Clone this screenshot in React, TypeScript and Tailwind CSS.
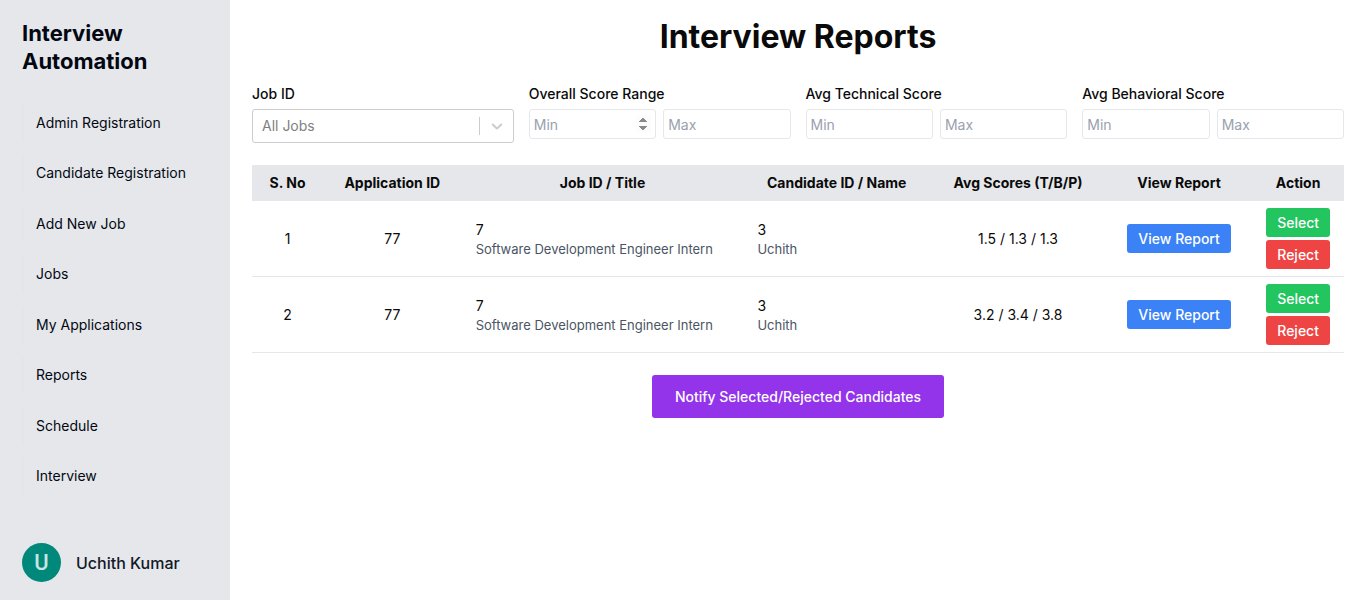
import React from "react";

const navItems = [
  "Admin Registration",
  "Candidate Registration",
  "Add New Job",
  "Jobs",
  "My Applications",
  "Reports",
  "Schedule",
  "Interview",
];

const scoreFilters = [
  { id: "overall", label: "Overall Score Range", stepper: true },
  { id: "technical", label: "Avg Technical Score", stepper: false },
  { id: "behavioral", label: "Avg Behavioral Score", stepper: false },
];

const reports = [
  { no: 1, application: 77, job: 7, title: "Software Development Engineer Intern", candidate: 3, name: "Uchith", scores: "1.5 / 1.3 / 1.3" },
  { no: 2, application: 77, job: 7, title: "Software Development Engineer Intern", candidate: 3, name: "Uchith", scores: "3.2 / 3.4 / 3.8" },
];

const columns = [
  { label: "S. No", width: "w-[6.5%]" },
  { label: "Application ID", width: "w-[12.7%]" },
  { label: "Job ID / Title", width: "w-[25.8%]" },
  { label: "Candidate ID / Name", width: "w-[17.1%]" },
  { label: "Avg Scores (T/B/P)", width: "w-[16.1%]" },
  { label: "View Report", width: "w-[13.4%]" },
  { label: "Action", width: "w-[8.4%]" },
];

function Sidebar() {
  return (
    <aside className="flex w-[230px] shrink-0 flex-col bg-gray-200 px-[22px] pt-[19px] pb-[18px]">
      <h2 className="text-[22px] leading-7 font-bold text-[#030712]">Interview Automation</h2>
      <nav className="mt-[30px] mb-[49px] flex flex-1 flex-col justify-between">
        {navItems.map((item) => (
          <a
            key={item}
            href="#"
            className="flex h-9 items-center border-l-2 border-[#e5e5e5] pl-3 text-sm whitespace-nowrap text-[#030712]"
          >
            {item}
          </a>
        ))}
      </nav>
      <div className="flex items-center gap-[15px]">
        <span className="flex size-[39px] items-center justify-center rounded-full bg-[#00897b] font-[Roboto,sans-serif] text-[22px] font-medium text-[#c8e6e2]">
          U
        </span>
        <span className="text-base font-medium text-[#111827]">Uchith Kumar</span>
      </div>
    </aside>
  );
}

function ScoreInput({ label, placeholder, stepper }: { label: string; placeholder: string; stepper: boolean }) {
  return (
    <input
      type="number"
      aria-label={label}
      placeholder={placeholder}
      className={
        "h-[30px] w-full min-w-0 rounded-[3px] border border-gray-200 px-1 text-sm placeholder:text-gray-400 " +
        (stepper ? "[&::-webkit-inner-spin-button]:opacity-100" : "")
      }
    />
  );
}

function Filters() {
  return (
    <div className="grid grid-cols-4 gap-[15px]">
      <div>
        <label htmlFor="job" className="mb-[5px] block text-sm leading-5 font-medium">
          Job ID
        </label>
        <div className="relative">
          <select
            id="job"
            className="h-[34px] w-full appearance-none rounded-[3px] border border-[#cccccc] bg-white px-[9px] text-sm text-[#808080]"
          >
            <option>All Jobs</option>
          </select>
          <div className="pointer-events-none absolute inset-y-0 right-0 flex items-center">
            <span className="h-[18px] w-px bg-[#cccccc]" />
            <svg viewBox="0 0 20 20" className="mx-2 size-[18px] fill-[#cccccc]" aria-hidden="true">
              <path d="M4.516 7.548c0.436-0.446 1.043-0.481 1.576 0l3.908 3.747 3.908-3.747c0.533-0.481 1.141-0.446 1.574 0 0.436 0.445 0.408 1.197 0 1.615-0.406 0.418-4.695 4.502-4.695 4.502-0.217 0.223-0.502 0.335-0.787 0.335s-0.57-0.112-0.789-0.335c0 0-4.287-4.084-4.695-4.502s-0.436-1.17 0-1.615z" />
            </svg>
          </div>
        </div>
      </div>
      {scoreFilters.map((f) => (
        <fieldset key={f.id} className="min-w-0">
          <legend className="mb-[5px] block text-sm leading-5 font-medium">{f.label}</legend>
          <div className="flex gap-[7px]">
            <ScoreInput label={f.label + " minimum"} placeholder="Min" stepper={f.stepper} />
            <ScoreInput label={f.label + " maximum"} placeholder="Max" stepper={false} />
          </div>
        </fieldset>
      ))}
    </div>
  );
}

function ReportsTable() {
  return (
    <table className="mt-[22px] w-full table-fixed text-sm">
      <thead className="bg-gray-200">
        <tr>
          {columns.map((c) => (
            <th key={c.label} className={"h-9 font-bold whitespace-nowrap " + c.width}>
              {c.label}
            </th>
          ))}
        </tr>
      </thead>
      <tbody>
        {reports.map((r) => (
          <tr key={r.no} className="border-b border-gray-200 text-center">
            <td>{r.no}</td>
            <td>{r.application}</td>
            <td className="px-[14px] text-left">
              <div className="leading-5">{r.job}</div>
              <div className="text-[13px] leading-[18px] text-gray-600">{r.title}</div>
            </td>
            <td className="px-[14px] text-left">
              <div className="leading-5">{r.candidate}</div>
              <div className="text-[13px] leading-[18px] text-gray-600">{r.name}</div>
            </td>
            <td>{r.scores}</td>
            <td>
              <button className="h-[29px] rounded-[3px] bg-[#3b82f6] px-[11px] font-medium text-white">View Report</button>
            </td>
            <td className="px-[14px] py-[7px]">
              <div className="flex flex-col gap-[3px]">
                <button className="h-[29px] rounded-[3px] bg-[#22c55e] font-medium text-white">Select</button>
                <button className="h-[29px] rounded-[3px] bg-[#ef4444] font-medium text-white">Reject</button>
              </div>
            </td>
          </tr>
        ))}
      </tbody>
    </table>
  );
}

export default function App() {
  return (
    <div className="flex min-h-screen bg-white font-[Inter,sans-serif] text-[#0a0a0a]">
      <Sidebar />
      <main className="min-w-0 flex-1 pt-[19px] pr-[14px] pb-6 pl-[22px]">
        <h1 className="mb-[29px] text-center text-[32px] leading-9 font-bold">Interview Reports</h1>
        <Filters />
        <ReportsTable />
        <div className="mt-[22px] flex justify-center">
          <button className="h-[43px] rounded-[3px] bg-[#9333ea] px-[23px] text-sm font-medium text-white">
            Notify Selected/Rejected Candidates
          </button>
        </div>
      </main>
    </div>
  );
}
